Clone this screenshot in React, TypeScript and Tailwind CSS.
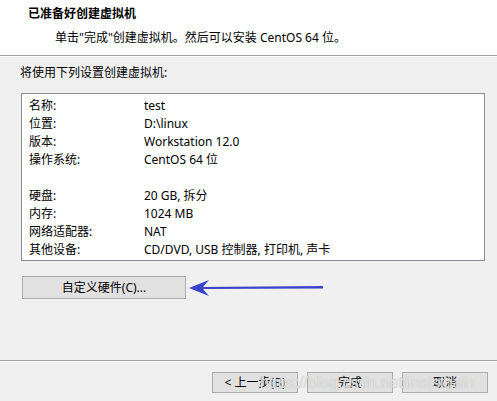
const font = { fontFamily: '"Segoe UI", "Noto Sans", "Noto Sans CJK SC", sans-serif' }

const rows: [string, string][] = [
  ['名称:', 'test'],
  ['位置:', 'D:\\linux'],
  ['版本:', 'Workstation 12.0'],
  ['操作系统:', 'CentOS 64 位'],
  ['', ''],
  ['硬盘:', '20 GB, 拆分'],
  ['内存:', '1024 MB'],
  ['网络适配器:', 'NAT'],
  ['其他设备:', 'CD/DVD, USB 控制器, 打印机, 声卡'],
]

export default function App() {
  return (
    <div className="w-[497px] h-[401px] bg-[#f0f0f0] text-black text-[12px] overflow-hidden flex flex-col" style={font}>
      <div className="h-[56px] bg-white border-b border-[#a0a0a0] pl-[28px] pt-[6px] shrink-0">
        <div className="font-bold leading-[16px]">已准备好创建虚拟机</div>
        <div className="pl-[27px] leading-[16px] mt-[8px]">单击"完成"创建虚拟机。然后可以安装 CentOS 64 位。</div>
      </div>
      <div className="h-px bg-white shrink-0" />
      <div className="pl-[20px] mt-[8px] leading-[16px]">将使用下列设置创建虚拟机:</div>
      <div className="ml-[21px] mt-[12px] w-[464px] h-[168px] bg-white border border-[#8c8c94] pt-[3px] shrink-0">
        {rows.map(([k, v], i) => (
          <div key={i} className="flex h-[18px] items-center leading-[18px]">
            <span className="w-[122px] pl-[7px]">{k}</span>
            <span>{v}</span>
          </div>
        ))}
      </div>
      <div className="flex items-center mt-[15px] ml-[22px]">
        <button className="w-[164px] h-[23px] bg-[#e1e1e1] border border-[#adadad] text-[12px] leading-none">自定义硬件(C)...</button>
        <svg width="140" height="20" viewBox="0 0 140 20" className="ml-[1px]">
          <path d="M2 10 L22 2 L16 9 L136 8 L136 10.5 L16 11 L22 18 Z" fill="#3b43c9" />
        </svg>
      </div>
      <div className="flex-1" />
      <div className="h-px bg-[#a0a0a0] shrink-0" />
      <div className="h-px bg-white shrink-0" />
      <div className="relative flex justify-end gap-[9px] pr-[9px] pt-[10px] pb-[8px]">
        <button className="w-[86px] h-[21px] bg-[#e1e1e1] border border-[#adadad] leading-none">&lt; 上一步(B)</button>
        <button className="w-[86px] h-[21px] bg-[#e1e1e1] border border-[#adadad] leading-none">完成</button>
        <button className="w-[86px] h-[21px] bg-[#e1e1e1] border border-[#adadad] leading-none">取消</button>
        <span className="absolute left-[260px] top-[9px] text-[16px] text-white/60 pointer-events-none" style={{ fontFamily: '"Liberation Sans", sans-serif', textShadow: '0 0 1px #aaa' }}>https://blog.csdn.net/insistgain</span>
      </div>
    </div>
  )
}
